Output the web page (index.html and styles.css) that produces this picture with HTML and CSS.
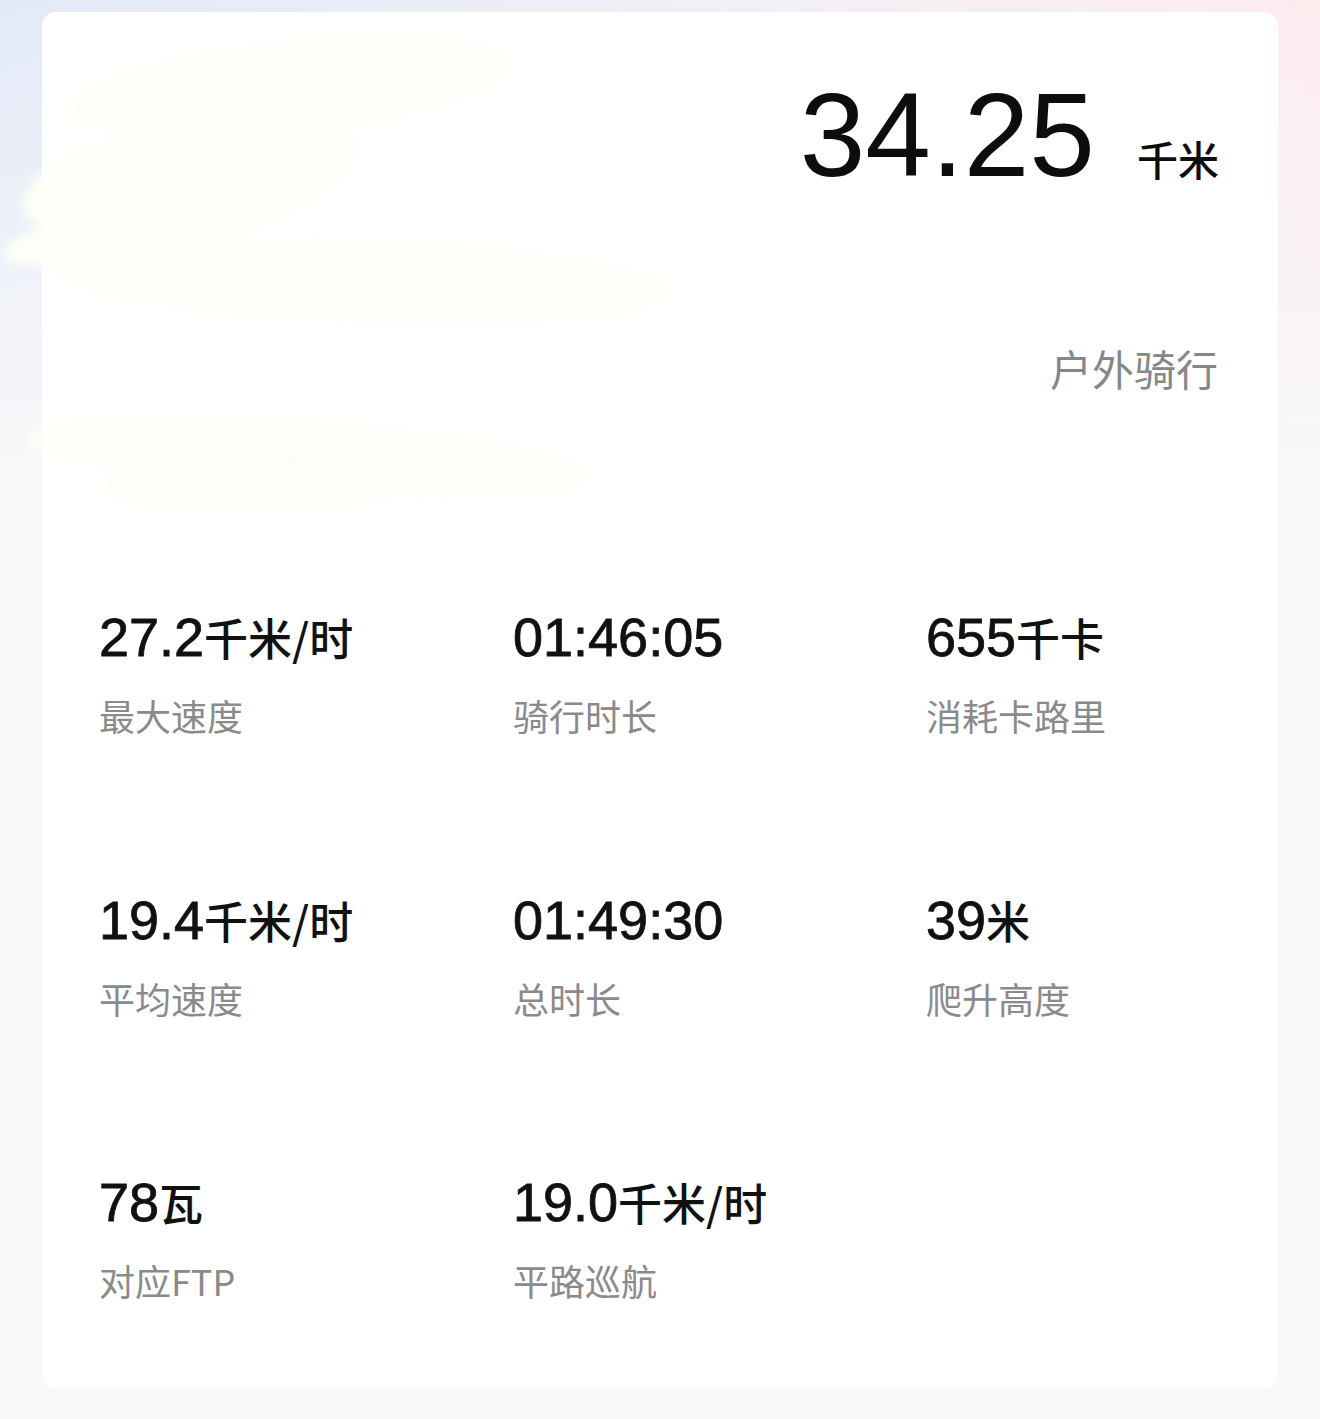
FILE: index.html
```html
<!DOCTYPE html>
<html lang="zh-CN">
<head>
  <meta charset="UTF-8">
  <title>骑行记录</title>
  <link rel="stylesheet" href="styles.css">
</head>
<body>
  <div class="card">
    <div class="smudge">
      <span class="blob b1"></span>
      <span class="blob b2"></span>
      <span class="blob b3"></span>
      <span class="blob b4"></span>
      <span class="blob b5"></span>
      <span class="blob b6"></span>
    </div>

    <div class="head">
      <div class="distance">
        <span class="big">34.25</span>
        <span class="big-unit">千米</span>
      </div>
      <div class="sport">户外骑行</div>
    </div>

    <div class="stats">
      <div class="stat">
        <div class="value">27.2<span class="unit">千米/时</span></div>
        <div class="label">最大速度</div>
      </div>
      <div class="stat">
        <div class="value">01:46:05</div>
        <div class="label">骑行时长</div>
      </div>
      <div class="stat">
        <div class="value">655<span class="unit">千卡</span></div>
        <div class="label">消耗卡路里</div>
      </div>

      <div class="stat">
        <div class="value">19.4<span class="unit">千米/时</span></div>
        <div class="label">平均速度</div>
      </div>
      <div class="stat">
        <div class="value">01:49:30</div>
        <div class="label">总时长</div>
      </div>
      <div class="stat">
        <div class="value">39<span class="unit">米</span></div>
        <div class="label">爬升高度</div>
      </div>

      <div class="stat">
        <div class="value">78<span class="unit">瓦</span></div>
        <div class="label">对应FTP</div>
      </div>
      <div class="stat">
        <div class="value">19.0<span class="unit">千米/时</span></div>
        <div class="label">平路巡航</div>
      </div>
    </div>
  </div>
</body>
</html>
```

FILE: styles.css
```css
body {
  margin: 0;
  height: 1419px;
  background:
    linear-gradient(to bottom, rgba(248,248,249,0) 0, #f8f8f9 470px),
    linear-gradient(to right, #e3e9f8, #f1f0f6 55%, #fdebee);
  font-family: "Liberation Sans", "Noto Sans CJK SC", sans-serif;
  overflow: hidden;
}

.card {
  position: relative;
  margin: 12px 42px 0;
  height: 1376px;
  box-sizing: border-box;
  padding: 64px 60px 0 57px;
  background: #fff;
  border-radius: 14px;
}

.head {
  display: flex;
  flex-direction: column;
  align-items: flex-end;
}

.distance {
  display: flex;
  align-items: baseline;
  gap: 42px;
  color: #0d0d0d;
  line-height: 1;
}

.big {
  font-size: 118px;
}

.big-unit {
  font-family: "Noto Sans CJK SC", sans-serif;
  font-size: 41px;
  font-weight: 500;
  margin-right: -1px;
}

.sport {
  margin-top: 149px;
  font-family: "Noto Sans CJK SC", sans-serif;
  font-size: 42px;
  line-height: 1.2;
  color: #878787;
}

.stats {
  margin-top: 214px;
  display: grid;
  grid-template-columns: 414px 413px 1fr;
  row-gap: 152px;
}

.value {
  font-size: 54px;
  line-height: 60px;
  color: #111;
  -webkit-text-stroke: 0.8px #111;
  white-space: nowrap;
}

.unit {
  font-family: "Noto Sans CJK SC", sans-serif;
  font-size: 44px;
  font-weight: 500;
  -webkit-text-stroke: 0;
}

.label {
  margin-top: 27px;
  font-family: "Noto Sans CJK SC", sans-serif;
  font-size: 36px;
  line-height: 1.2;
  color: #8a8a8a;
}

/* redacted area, top left */
.smudge {
  position: absolute;
  left: -42px;
  top: 0;
  width: 720px;
  height: 520px;
  pointer-events: none;
}

.blob {
  position: absolute;
  background: #fdfef8;
  border-radius: 50%;
  filter: blur(5px);
}

.b1 { left: 70px; top: 30px; width: 440px; height: 90px; transform: rotate(-6deg); }
.b2 { left: 20px; top: 110px; width: 340px; height: 110px; transform: rotate(-10deg); }
.b3 { left: 0; top: 180px; width: 320px; height: 60px; transform: rotate(-12deg); }
.b4 { left: 60px; top: 230px; width: 610px; height: 80px; transform: rotate(2deg); }
.b5 { left: 30px; top: 410px; width: 560px; height: 70px; transform: rotate(4deg); }
.b6 { left: 100px; top: 450px; width: 300px; height: 50px; }
```
